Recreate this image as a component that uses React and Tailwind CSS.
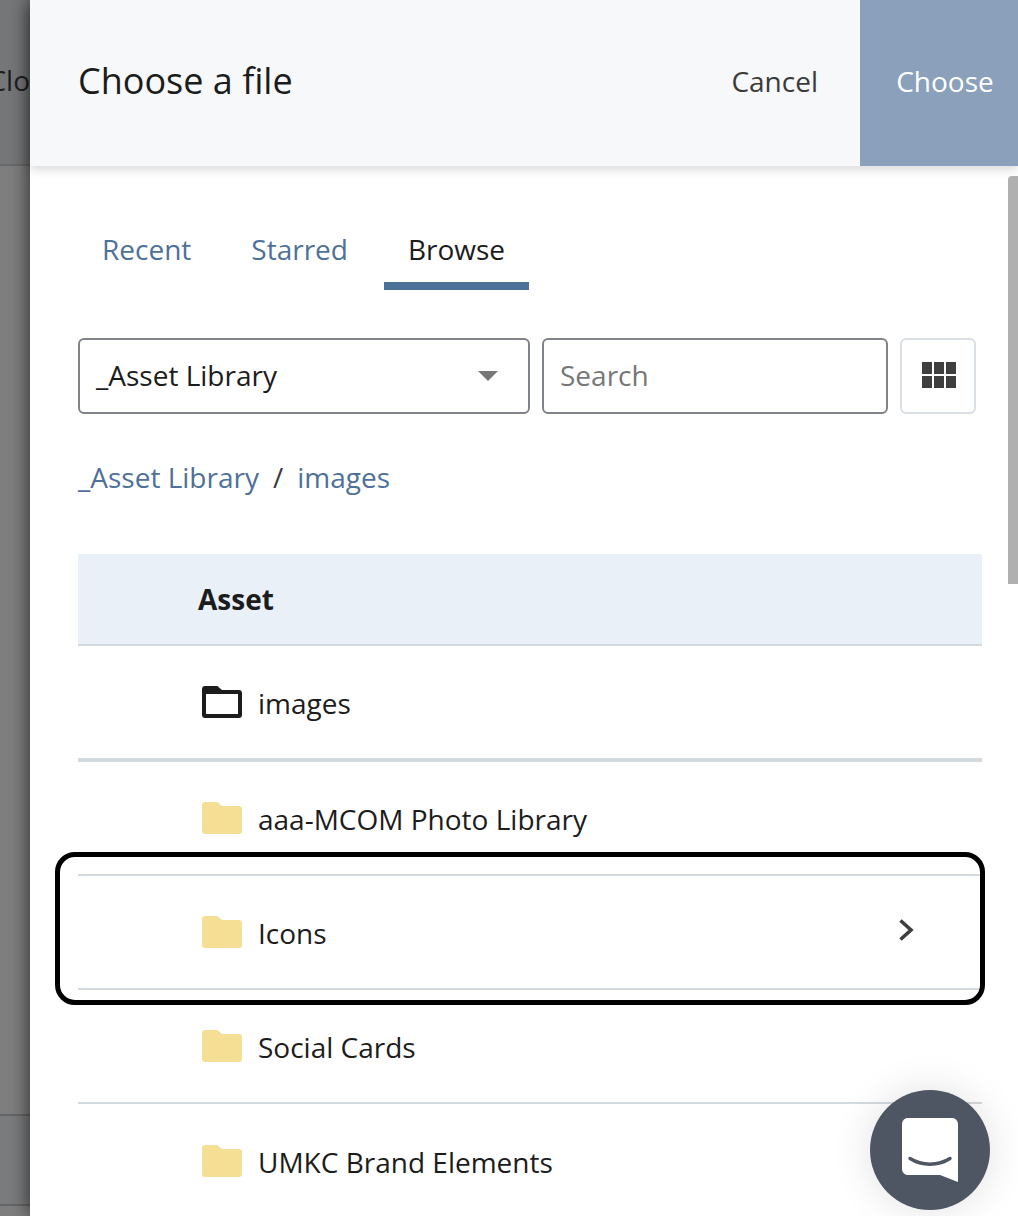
import React from "react";

const font = { fontFamily: '"Open Sans", sans-serif' };

function Folder({ open }) {
  if (open) {
    return (
      <svg width="40" height="32" viewBox="0 0 40 32" className="shrink-0">
        <path
          d="M3 0h11c1.400 0 2.200.5 3 1.400L20 4h17c1.700 0 3 1.300 3 3v22c0 1.700-1.300 3-3 3H3c-1.700 0-3-1.300-3-3V3c0-1.700 1.300-3 3-3zM4 8v20h32V8H4z"
          fill="#1c1c1c"
          fillRule="evenodd"
        />
      </svg>
    );
  }
  return (
    <svg width="40" height="32" viewBox="0 0 40 32" className="shrink-0">
      <path
        d="M3 0h11c1.400 0 2.200.5 3 1.400L20 4h17c1.700 0 3 1.300 3 3v22c0 1.700-1.300 3-3 3H3c-1.700 0-3-1.300-3-3V3c0-1.700 1.300-3 3-3z"
        fill="#f5df94"
      />
    </svg>
  );
}

function Row({ name, height, border, open, chevron }) {
  return (
    <div className={`flex shrink-0 items-center pl-[124px] ${height} ${border}`}>
      <Folder open={open} />
      <span className="ml-4 pt-[2px] text-[28px] leading-none text-[#1c1c1c]">{name}</span>
      {chevron && (
        <svg width="16" height="24" viewBox="0 0 16 24" className="ml-auto mr-[68px] mb-1">
          <path d="M2.500 2.500L13 12 2.500 21.500" fill="none" stroke="#3e3e3e" strokeWidth="3.600" />
        </svg>
      )}
    </div>
  );
}

export default function App() {
  return (
    <div className="relative flex h-[1216px] w-[1018px] overflow-hidden bg-white" style={font}>
      {/* page behind the panel */}
      <div className="flex w-[30px] shrink-0 flex-col overflow-hidden bg-[#7f7f7f]">
        <div className="flex h-[166px] shrink-0 items-center justify-end border-b-2 border-[#6a6a6a] bg-[#767778]">
          <span className="mb-1 whitespace-nowrap text-[28px] text-[#1e1e1e]">Clo</span>
        </div>
        <div className="h-[948px] shrink-0" />
        <div className="h-[90px] shrink-0 border-t-2 border-[#666] bg-[#7b7c7e]" />
        <div className="flex-1 border-t-2 border-[#666]" />
      </div>

      {/* panel */}
      <div className="relative z-10 flex w-[988px] shrink-0 flex-col bg-white shadow-[0_0_20px_rgba(0,0,0,0.7)]">
        <header className="relative z-10 flex h-[166px] shrink-0 items-center justify-between bg-[#f6f8fa] pl-12 shadow-[0_3px_10px_rgba(0,0,0,0.16)]">
          <h1 className="mb-1 text-[36px] font-normal text-[#1c1c1c]">Choose a file</h1>
          <div className="flex h-full items-center">
            <span className="mb-1 mr-[42px] text-[28px] text-[#3b3b3b]">Cancel</span>
            <span className="flex h-full w-[158px] items-center justify-center bg-[#8ba1bb] pb-1 pl-3 text-[28px] text-white">
              Choose
            </span>
          </div>
        </header>

        <div className="flex flex-col pl-12 pr-[36px]">
          <nav className="mt-[58px] flex h-[66px] gap-3">
            <span className="px-6 pt-1.5 text-[28px] leading-[38px] text-[#4e719a]">Recent</span>
            <span className="px-6 pt-1.5 text-[28px] leading-[38px] text-[#4e719a]">Starred</span>
            <span className="border-b-8 border-[#4e719a] px-6 pt-1.5 text-[28px] leading-[38px] text-[#1c1c1c]">Browse</span>
          </nav>

          <div className="mt-12 flex gap-3">
            <div className="flex h-[76px] w-[452px] items-center justify-between rounded-md border-2 border-[#81838a] pl-4 pr-[30px] text-[28px] text-[#1c1c1c]">
              <span className="pb-[2px]">_Asset Library</span>
              <svg width="20" height="10" viewBox="0 0 20 10">
                <path d="M0 0h20L10 10z" fill="#777" />
              </svg>
            </div>
            <div className="flex h-[76px] w-[346px] items-center rounded-md border-2 border-[#81838a] pb-[2px] pl-4 text-[28px] text-[#777]">
              Search
            </div>
            <div className="flex h-[76px] w-[76px] items-center justify-center rounded-md border-2 border-[#d9dfe4]">
              <svg width="34" height="26" viewBox="0 0 34 26" className="mb-[2px] ml-[2px]">
                <g fill="#3e3e3e">
                  <rect x="0" y="0" width="10" height="12" />
                  <rect x="12" y="0" width="10" height="12" />
                  <rect x="24" y="0" width="10" height="12" />
                  <rect x="0" y="14" width="10" height="12" />
                  <rect x="12" y="14" width="10" height="12" />
                  <rect x="24" y="14" width="10" height="12" />
                </g>
              </svg>
            </div>
          </div>

          <div className="mt-[43px] flex h-[40px] items-center text-[28px] text-[#4e719a]">
            <span>_Asset Library</span>
            <span className="mx-[14px] text-[#3b3b3b]">/</span>
            <span>images</span>
          </div>

          <div className="mt-[57px] flex h-[92px] w-[904px] items-center border-b-2 border-[#d5dade] bg-[#e9f0f8] pl-[120px] text-[28px] font-bold text-[#1c1c1c]">
            Asset
          </div>
          <div className="flex w-[904px] flex-col">
            <Row name="images" open height="h-[112px]" border="" />
            <div className="h-1 shrink-0 bg-[#d5dade]" />
            <Row name="aaa-MCOM Photo Library" height="h-[114px]" border="border-b-2 border-[#d5dade]" />
            <Row name="Icons" chevron height="h-[114px]" border="border-b-2 border-[#d5dade]" />
            <Row name="Social Cards" height="h-[114px]" border="border-b-2 border-[#d5dade]" />
            <Row name="UMKC Brand Elements" height="h-[114px]" border="" />
          </div>
        </div>
      </div>

      {/* focus outline around the Icons row */}
      <div className="absolute left-[55px] top-[852px] z-20 h-[153px] w-[930px] rounded-[20px] border-[5px] border-black" />

      {/* panel scrollbar */}
      <div className="absolute left-[1008px] top-[176px] z-20 h-[408px] w-[10px] rounded-tl bg-[#b0b0b0]" />

      {/* chat launcher */}
      <div className="absolute left-[870px] top-[1090px] z-30 flex h-[120px] w-[120px] items-center justify-center rounded-full bg-[#4f5663] shadow-[0_0_40px_rgba(0,0,0,0.12)]">
        <svg width="56" height="64" viewBox="0 0 56 64">
          <path
            d="M6 0h44c3.300 0 6 2.700 6 6v58l-18-7H6c-3.300 0-6-2.700-6-6V6c0-3.300 2.700-6 6-6z"
            fill="#fff"
          />
          <path d="M8 40.500c12 7.500 28 7.500 40 0" fill="none" stroke="#4f5663" strokeWidth="3.500" strokeLinecap="round" />
        </svg>
      </div>
    </div>
  );
}
